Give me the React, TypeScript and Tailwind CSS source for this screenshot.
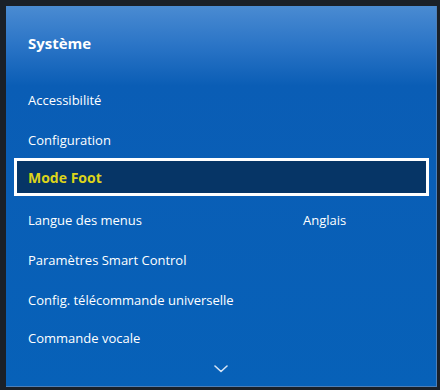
import React from "react";

const rows = [
  { label: "Accessibilité" },
  { label: "Configuration" },
  { label: "Mode Foot", selected: true },
  { label: "Langue des menus", value: "Anglais" },
  { label: "Paramètres Smart Control" },
  { label: "Config. télécommande universelle" },
  { label: "Commande vocale" },
];

export default function App() {
  return (
    <div
      className="h-[390px] w-[440px] bg-[#1a2028] pt-[6px] pl-[6px] pr-[3px] pb-[3px]"
      style={{ fontFamily: '"Open Sans", "Noto Sans", sans-serif' }}
    >
      <div className="flex h-full flex-col border-r border-b border-[#4d7fb8] bg-[linear-gradient(to_bottom,#4a8bd2_0px,#2a74c6_40px,#0a5db5_80px,#0761b8_100%)]">
        {/* Header */}
        <div className="flex h-[75px] items-center pl-[22px] text-[15px] font-bold text-white">
          Système
        </div>

        {/* Menu */}
        <div className="flex flex-col">
          {rows.map((row) =>
            row.selected ? (
              <div
                key={row.label}
                className="mt-[-3px] mb-[5px] ml-[8px] mr-[7px] flex h-[38px] items-center border-[3px] border-white bg-[#063566] pl-[11px] text-[14px] font-bold text-[#ddd41a]"
              >
                {row.label}
              </div>
            ) : (
              <div
                key={row.label}
                className="flex h-[40px] items-center pl-[22px] text-[13px] text-white last:h-[36px]"
              >
                <span className="w-[275px]">{row.label}</span>
                {row.value && <span>{row.value}</span>}
              </div>
            )
          )}
        </div>

        {/* Scroll indicator */}
        <div className="flex justify-center pt-[8px]">
          <svg width="14" height="8" viewBox="0 0 14 8" fill="none">
            <polyline
              points="1,1 7,6.5 13,1"
              stroke="#d6e4f5"
              strokeWidth="1.6"
              strokeLinecap="round"
              strokeLinejoin="round"
            />
          </svg>
        </div>
      </div>
    </div>
  );
}
